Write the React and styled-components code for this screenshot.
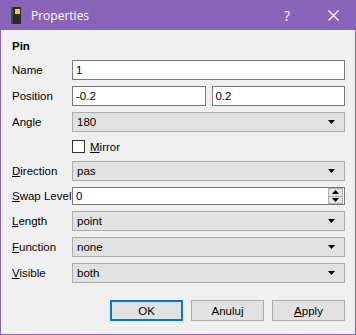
import React from "react";
import styled, { createGlobalStyle } from "styled-components";

const Global = createGlobalStyle`
  html, body {
    margin: 0;
    padding: 0;
    background: #f0f0f0;
  }
  * {
    box-sizing: border-box;
  }
`;

function BookIcon() {
  return (
    <svg width="10" height="17" viewBox="0 0 10 17">
      <rect x="0" y="0" width="10" height="17" rx="1" fill="#2b2b2b" />
      <rect x="0" y="0" width="2" height="17" fill="#4a4a4a" />
      <rect x="4" y="2" width="5" height="5" fill="#f2d300" />
    </svg>
  );
}

function Arrow() {
  return (
    <svg width="7" height="4" viewBox="0 0 7 4">
      <path d="M0 0 H7 L3.5 4 Z" fill="#000" />
    </svg>
  );
}

function Combo({ value }) {
  return (
    <ComboBox>
      <span>{value}</span>
      <Arrow />
    </ComboBox>
  );
}

function Mn({ k, rest }) {
  return (
    <span>
      <u>{k}</u>
      {rest}
    </span>
  );
}

export default function App() {
  return (
    <Window>
      <Global />
      <TitleBar>
        <TitleLeft>
          <BookIcon />
          <Title>Properties</Title>
        </TitleLeft>
        <TitleButtons>
          <Help>?</Help>
          <Close>
            <svg width="11" height="11" viewBox="0 0 11 11">
              <path d="M0.5 0.5 L10.5 10.5 M10.5 0.5 L0.5 10.5" stroke="#fff" strokeWidth="1.3" />
            </svg>
          </Close>
        </TitleButtons>
      </TitleBar>
      <Body>
        <Section>Pin</Section>
        <Form>
          <Label>Name</Label>
          <Input>1</Input>

          <Label>Position</Label>
          <Pair>
            <Input>-0.2</Input>
            <Input>0.2</Input>
          </Pair>

          <Label>Angle</Label>
          <Combo value="180" />

          <span />
          <Check>
            <Box />
            <Mn k="M" rest="irror" />
          </Check>

          <Label>
            <Mn k="D" rest="irection" />
          </Label>
          <Combo value="pas" />

          <Label>
            <Mn k="S" rest="wap Level" />
          </Label>
          <Spin>
            <span>0</span>
            <SpinButtons>
              <SpinBtn>
                <svg width="7" height="4" viewBox="0 0 7 4">
                  <path d="M0 4 H7 L3.5 0 Z" fill="#000" />
                </svg>
              </SpinBtn>
              <SpinBtn>
                <Arrow />
              </SpinBtn>
            </SpinButtons>
          </Spin>

          <Label>
            <Mn k="L" rest="ength" />
          </Label>
          <Combo value="point" />

          <Label>
            <Mn k="F" rest="unction" />
          </Label>
          <Combo value="none" />

          <Label>
            <Mn k="V" rest="isible" />
          </Label>
          <Combo value="both" />
        </Form>
        <Buttons>
          <Button $default>OK</Button>
          <Button>Anuluj</Button>
          <Button>
            <Mn k="A" rest="pply" />
          </Button>
        </Buttons>
      </Body>
    </Window>
  );
}

const Window = styled.div`
  width: 356px;
  height: 335px;
  border: 1px solid #8864b8;
  border-top: none;
  background: #f0f0f0;
  display: flex;
  flex-direction: column;
  font-family: "Liberation Sans", Arial, sans-serif;
  font-size: 11.5px;
  color: #000;
`;

const TitleBar = styled.div`
  height: 30px;
  margin: 0 -1px;
  background: #8864b8;
  display: flex;
  align-items: center;
  justify-content: space-between;
  padding: 0 0 0 11px;
`;

const TitleLeft = styled.div`
  display: flex;
  align-items: center;
  gap: 10px;
`;

const Title = styled.span`
  color: #fff;
  font-family: "Open Sans", "Noto Sans", sans-serif;
  font-size: 12px;
`;

const TitleButtons = styled.div`
  display: flex;
  height: 100%;
`;

const Help = styled.div`
  width: 46px;
  display: flex;
  align-items: center;
  justify-content: center;
  color: #fff;
  font-family: "Open Sans", "Noto Sans", sans-serif;
  font-size: 14px;
`;

const Close = styled(Help)``;

const Body = styled.div`
  flex: 1;
  padding: 9px 10px 0 11px;
  display: flex;
  flex-direction: column;
`;

const Section = styled.div`
  font-weight: bold;
  height: 15px;
  line-height: 15px;
  margin-bottom: 6px;
`;

const Form = styled.div`
  display: grid;
  grid-template-columns: 60px 1fr;
  row-gap: 6px;
  align-items: center;
`;

const Label = styled.span`
  white-space: nowrap;
`;

const Input = styled.div`
  height: 20px;
  background: #fff;
  border: 1px solid #7a7a7a;
  padding: 0 3px;
  display: flex;
  align-items: center;
`;

const Pair = styled.div`
  display: grid;
  grid-template-columns: 1fr 1fr;
  gap: 6px;
`;

const ComboBox = styled.div`
  height: 20px;
  background: #e1e1e1;
  border: 1px solid #adadad;
  padding: 0 9px 0 4px;
  display: flex;
  align-items: center;
  justify-content: space-between;
`;

const Check = styled.label`
  height: 17px;
  display: flex;
  align-items: center;
  gap: 5px;
`;

const Box = styled.span`
  width: 13px;
  height: 13px;
  background: #fff;
  border: 1px solid #333;
`;

const Spin = styled.div`
  height: 18px;
  background: #fff;
  border: 1px solid #7a7a7a;
  padding: 0 1px 0 3px;
  display: flex;
  align-items: center;
  justify-content: space-between;
`;

const SpinButtons = styled.div`
  display: flex;
  flex-direction: column;
  width: 15px;
  height: 16px;
  border: 1px solid #adadad;
`;

const SpinBtn = styled.div`
  flex: 1;
  background: #e5e5e5;
  display: flex;
  align-items: center;
  justify-content: center;
  & + & {
    border-top: 1px solid #adadad;
  }
`;

const Buttons = styled.div`
  display: flex;
  justify-content: flex-end;
  gap: 8px;
  margin-top: 17px;
`;

const Button = styled.div`
  width: 73px;
  height: 21px;
  background: #e1e1e1;
  border: ${(p) => (p.$default ? "2px solid #0078d7" : "1px solid #adadad")};
  display: flex;
  align-items: center;
  justify-content: center;
`;
